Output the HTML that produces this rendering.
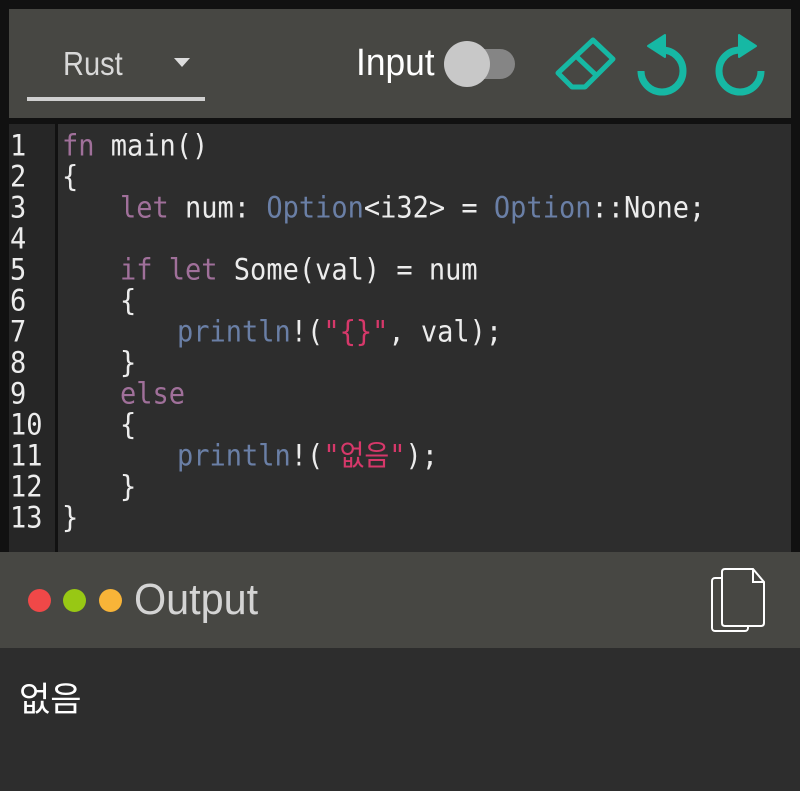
<!DOCTYPE html>
<html><head><meta charset="utf-8"><style>
body{margin:0;width:800px;height:791px;background:#111;position:relative;overflow:hidden;font-family:"Liberation Sans","Noto Sans CJK KR",sans-serif}
.bar{position:absolute;left:9px;top:9px;width:782px;height:109px;background:#474743}
.ed{position:absolute;left:9px;top:124px;width:782px;height:428px;background:#2d2d2d}
.gut{position:absolute;left:0;top:0;width:46px;height:428px;background:#262626;border-right:3px solid #111}
.code{position:absolute;left:0;top:131px;font-family:"DejaVu Sans Mono","Noto Sans CJK KR",monospace;font-size:27px;color:#ececec;white-space:pre}
.ln{position:absolute;left:10px;width:40px;height:31px;line-height:31px;transform:scaleY(1.08);transform-origin:left center}
.k{color:#a0709a}.t{color:#6a7fa6}.s{color:#d6386a}
.oh{position:absolute;left:0;top:552px;width:800px;height:96px;background:#474743}
.ob{position:absolute;left:0;top:648px;width:800px;height:143px;background:#2d2d2d}
.dot{position:absolute;top:589px;width:23px;height:23px;border-radius:50%}
.cond{transform-origin:left top;white-space:nowrap}
</style></head><body>
<div class="bar"></div>
<div class="cond" style="position:absolute;left:63px;top:45px;font-size:33px;color:#d8d8d8;transform:scaleX(0.88)">Rust</div>
<div style="position:absolute;left:174px;top:58px;width:0;height:0;border-left:8px solid transparent;border-right:8px solid transparent;border-top:9px solid #ddd"></div>
<div style="position:absolute;left:27px;top:97px;width:178px;height:4px;background:#d0d0d0"></div>
<div class="cond" style="position:absolute;left:356px;top:42px;font-size:38px;color:#fff;transform:scaleX(0.93)">Input</div>
<div style="position:absolute;left:460px;top:49px;width:55px;height:30px;border-radius:15px;background:#858585"></div>
<div style="position:absolute;left:444px;top:41px;width:46px;height:46px;border-radius:50%;background:#c8c8c8"></div>
<svg style="position:absolute;left:550px;top:30px" width="230" height="70" viewBox="0 0 230 70" fill="none" stroke="#16b8a4" stroke-width="5" stroke-linejoin="round">
<path d="M8 43 L43 10 L63 29 L35 57 L22 57 Z M26 26 L46 45"/>
<path d="M112 20 A21 21 0 1 1 91 41" stroke-width="7"/>
<path d="M98 16 L115 5 L115 27 Z" fill="#16b8a4" stroke-width="2"/>
<path d="M190 20 A21 21 0 1 0 211 41" stroke-width="7"/>
<path d="M206 16 L189 5 L189 27 Z" fill="#16b8a4" stroke-width="2"/>
</svg>
<div class="ed"><div class="gut"></div></div>
<div class="code">
<div class="ln" style="top:0">1</div><div class="ln" style="top:31px">2</div><div class="ln" style="top:62px">3</div><div class="ln" style="top:93px">4</div><div class="ln" style="top:124px">5</div><div class="ln" style="top:155px">6</div><div class="ln" style="top:186px">7</div><div class="ln" style="top:217px">8</div><div class="ln" style="top:248px">9</div><div class="ln" style="top:279px">10</div><div class="ln" style="top:310px">11</div><div class="ln" style="top:341px">12</div><div class="ln" style="top:372px">13</div>
<div class="ln" style="top:0;left:62px;width:700px"><span class="k">fn</span> main()</div>
<div class="ln" style="top:31px;left:62px">{</div>
<div class="ln" style="top:62px;left:120px;width:700px"><span class="k">let</span> num: <span class="t">Option</span>&lt;i32&gt; = <span class="t">Option</span>::None;</div>
<div class="ln" style="top:124px;left:120px;width:700px"><span class="k">if let</span> Some(val) = num</div>
<div class="ln" style="top:155px;left:120px">{</div>
<div class="ln" style="top:186px;left:177px;width:600px"><span class="t">println</span>!(<span class="s">"{}"</span>, val);</div>
<div class="ln" style="top:217px;left:120px">}</div>
<div class="ln" style="top:248px;left:120px;width:200px"><span class="k">else</span></div>
<div class="ln" style="top:279px;left:120px">{</div>
<div class="ln" style="top:310px;left:177px;width:600px"><span class="t">println</span>!(<span class="s">"없음"</span>);</div>
<div class="ln" style="top:341px;left:120px">}</div>
<div class="ln" style="top:372px;left:62px">}</div>
</div>
<div class="oh"></div>
<div class="dot" style="left:28px;background:#f04848"></div>
<div class="dot" style="left:63px;background:#98c814"></div>
<div class="dot" style="left:99px;background:#f8b438"></div>
<div class="cond" style="position:absolute;left:134px;top:575px;font-size:44px;color:#d4d4d4;transform:scaleX(0.94)">Output</div>
<svg style="position:absolute;left:710px;top:568px" width="58" height="66" viewBox="0 0 58 66" fill="#474743" stroke="#fff" stroke-width="2">
<rect x="2" y="10" width="36" height="53" rx="3"/>
<path d="M12 4 Q12 1 15 1 L43 1 L54 14 L54 55 Q54 58 51 58 L15 58 Q12 58 12 55 Z"/>
<path d="M43 1 L43 14 L54 14" fill="none"/>
</svg>
<div class="ob"></div>
<div style="position:absolute;left:19px;top:672px;font-size:34px;color:#fff">없음</div>
</body></html>
